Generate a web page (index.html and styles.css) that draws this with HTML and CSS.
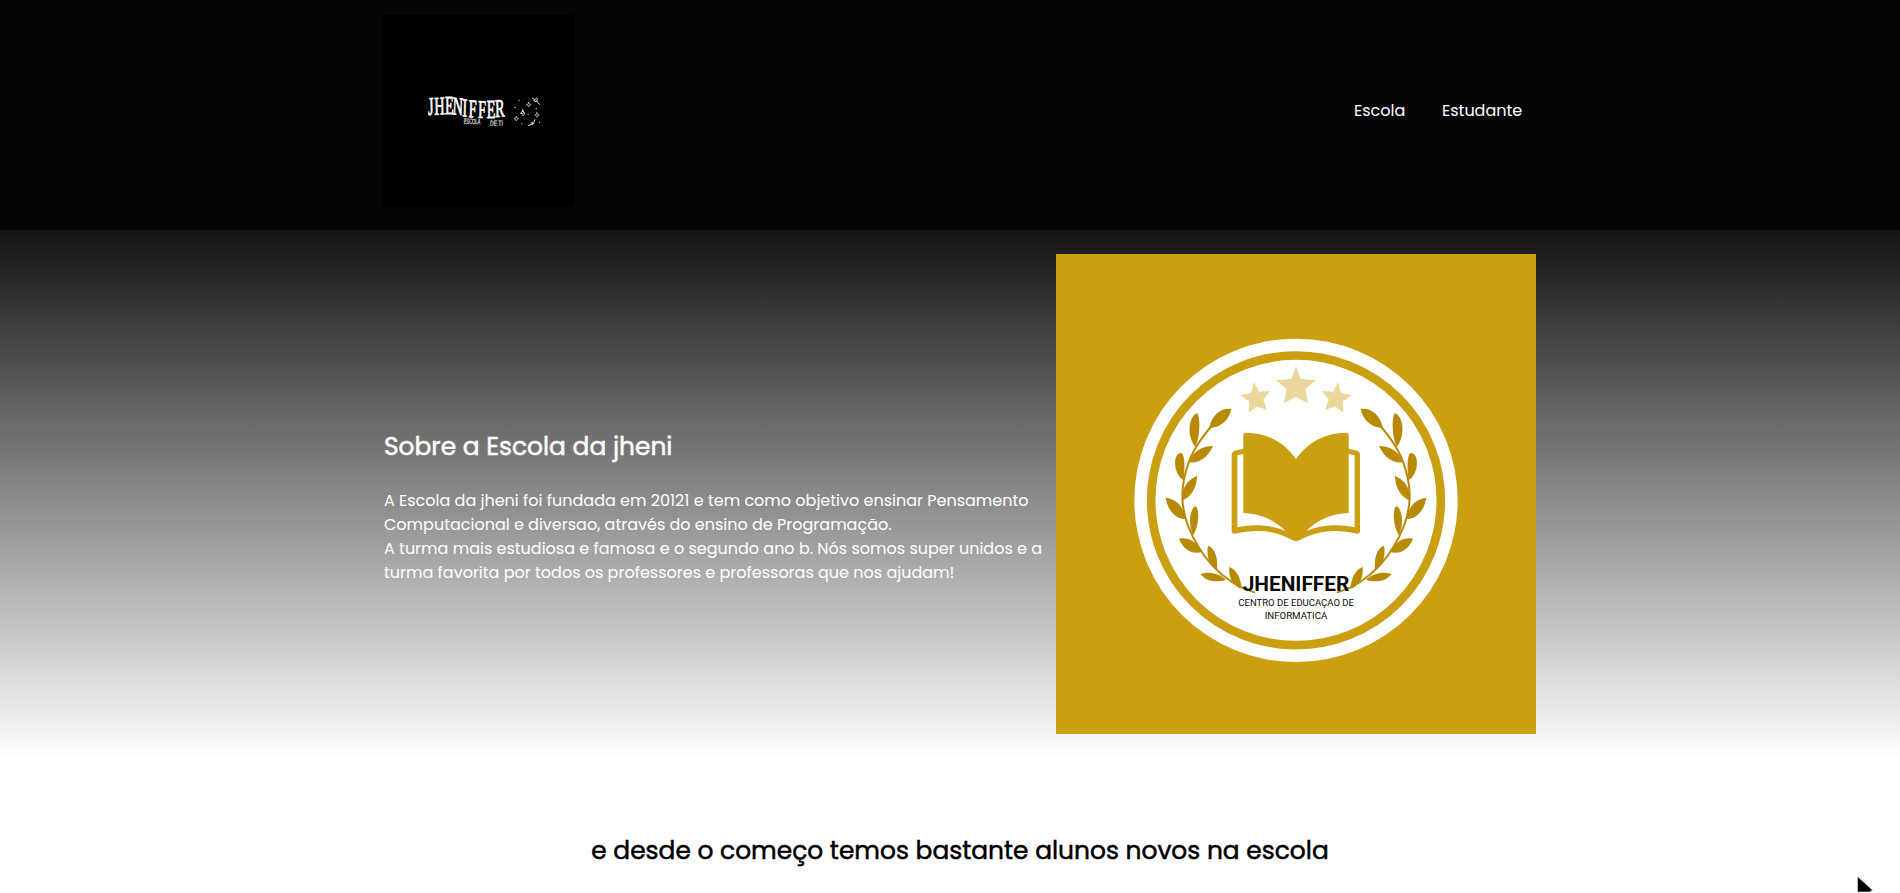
FILE: index.html
```html
<!DOCTYPE html>
<html lang="pt-BR">
<head>
<meta charset="utf-8">
<title>Escola da jheni</title>
<link rel="stylesheet" href="styles.css">
</head>
<body>
<header class="header">
  <div class="header-inner">
    <svg class="logo" viewBox="36 42 576 576" role="img" aria-label="Jheniffer">
      <rect x="36" y="42" width="576" height="576" fill="#000"/>
      <g fill="#fff" stroke="#fff" font-family="Liberation Serif, serif">
        <text transform="scale(.56 1)" font-size="76" stroke-width="2.5" x="312 346 402 442 494 528 578 625 671" y="345 344 342 343 348 351 353 354 351" rotate="-3 -2 0 3 3 2 1 0 -2">JHENIFFER</text>
        <text transform="translate(281 371) rotate(2) scale(.55 1)" font-family="Liberation Sans, sans-serif" font-size="23" stroke-width=".4" textLength="91" lengthAdjust="spacingAndGlyphs">ESCOLA</text>
        <text transform="translate(360 377) rotate(1) scale(.6 1)" font-family="Liberation Sans, sans-serif" font-size="23" stroke-width=".4" textLength="64" lengthAdjust="spacingAndGlyphs">DE TI</text>
      </g>
      <g fill="none" stroke="#ddd" stroke-width="2" stroke-linecap="round">
        <path d="M476 307l2 5 5 2-5 2-2 5-2-5-5-2 5-2zM501 338l2 5 5 2-5 2-2 5-2-5-5-2 5-2zM439 349l2 5 5 2-5 2-2 5-2-5-5-2 5-2z"/>
        <path d="M488 294q8 3 4 9q8-13 10-5q-1 8-8 7q10-5 9 3l6 5M458 328q-2 8 4 6q-10-1-10 7q8 2 10-5q5 10-5 10M475 376q8 2 8-5q5 9 7-3q-7-5-4 3q8 0 8-12" stroke-width="3"/>
        <path d="M447 301h1M434 322h2M498 325h2M474 343h1M455 371h1M508 367h1" stroke-width="3"/>
      </g>
    </svg>
    <nav class="nav">
      <a class="nav-link nav-escola">Escola</a>
      <a class="nav-link nav-estudante">Estudante</a>
    </nav>
  </div>
</header>
<main>
  <section class="about">
    <div class="about-inner">
      <div class="about-text">
        <h2 class="title">Sobre a Escola da jheni</h2>
        <p class="copy">
          <span class="line">A Escola da jheni foi fundada em 20121 e tem como objetivo ensinar Pensamento</span>
          <span class="line">Computacional e diversao, através do ensino de Programação.</span>
          <span class="line">A turma mais estudiosa e famosa e o segundo ano b. Nós somos super unidos e a</span>
          <span class="line">turma favorita por todos os professores e professoras que nos ajudam!</span>
        </p>
      </div>
      <svg class="emblem" viewBox="-192 -228 1440 1440" role="img" aria-label="Jheniffer centro de educação">
        <defs>
          <g id="branch">
            <path fill="none" stroke="#b88a04" stroke-width="6" stroke-linecap="round" d="M302 258C250 312 222 352 206 398C184 460 178 520 205 590C236 668 300 756 403 787"/>
            <path d="M334 237C303 233 274 256 268 294C298 293 326 275 334 237Z"/>
            <path d="M231 249C203 262 201 322 226 350C240 322 242 262 231 249Z"/>
            <path d="M279 348C240 348 216 369 209 397C240 401 264 380 279 348Z"/>
            <path d="M184 369C158 366 158 432 190 450C196 412 194 372 184 369Z"/>
            <path d="M231 437C196 453 183 482 188 511C218 498 231 466 231 437Z"/>
            <path d="M137 503C144 545 168 566 196 568C191 532 173 508 137 503Z"/>
            <path d="M227 528C206 538 206 590 219 616C236 592 240 540 227 528Z"/>
            <path d="M177 626C190 660 219 674 245 666C229 635 205 620 177 626Z"/>
            <path d="M264 647C258 676 268 709 291 720C294 685 286 654 264 647Z"/>
            <path d="M242 732C260 758 294 757 318 749C294 727 264 724 242 732Z"/>
            <path d="M328 711C325 742 337 768 365 776C363 746 350 719 328 711Z"/>
          </g>
          <g id="side">
            <use href="#branch" fill="#b88a04"/>
            <path fill="#e9d79b" d="M402 157l15 28 34-2-21 25 11 31-31-9-24 18 1-35-27-17 33-8z"/>
          </g>
        </defs>
        <rect x="-192" y="-228" width="1440" height="1440" fill="#cb9f12"/>
        <circle cx="528" cy="511" r="485" fill="#fff"/>
        <circle cx="528" cy="511" r="434.5" fill="none" stroke="#cb9f12" stroke-width="26"/>
        <use href="#side"/>
        <use href="#side" transform="translate(1056 0) scale(-1 1)"/>
        <path fill="#e9d79b" d="M528 108l14 39 45 4-31 27 8 42-36-19-37 19 9-42-32-27 46-4z"/>
        <path fill="#cb9f12" d="M335 373Q336 365 344 362L370 356V314Q370 308 378 308C440 309 492 335 528 387C564 335 616 309 678 308Q686 308 686 314V356L712 362Q720 365 720 373V606Q718 612 711 611C650 597 594 600 540 630Q528 636 516 630C462 600 406 597 345 611Q336 612 335 606Z"/>
        <path id="page" fill="#fff" d="M352 376L370 371V549C420 550 467 572 497 603C450 584 400 582 352 592Z"/>
        <use href="#page" transform="translate(1056 0) scale(-1 1)"/>
        <g font-family="Roboto, sans-serif" fill="#0b0b0b">
          <text x="368" y="783" font-size="63" font-weight="700" textLength="320" lengthAdjust="spacingAndGlyphs">JHENIFFER</text>
          <text x="355" y="829" font-size="29" textLength="347" lengthAdjust="spacingAndGlyphs">CENTRO DE EDUCAÇAO DE</text>
          <text x="434" y="867" font-size="29" textLength="188" lengthAdjust="spacingAndGlyphs">INFORMATICA</text>
        </g>
      </svg>
    </div>
  </section>
  <section class="students">
    <h2 class="students-title">e desde o começo temos bastante alunos novos na escola</h2>
  </section>
</main>
<svg class="pointer" viewBox="0 0 18 18" aria-hidden="true"><path d="M1.5 1.5V17H14L16.5 15Z" fill="#000" stroke="#ccc" stroke-width=".8"/></svg>
</body>
</html>
```
FILE: styles.css
```css
* { box-sizing: border-box; }
body {
  margin: 0;
  height: 893px;
  overflow: hidden;
  background: #fff;
  font-family: Poppins, Inter, sans-serif;
  font-size: 16px;
  line-height: 24px;
}
h2, p { margin: 0; }
.header { height: 230px; padding-top: 14px; background: #050507; }
.header-inner, .about-inner {
  width: 1154px;
  margin-left: 382px;
  display: flex;
  align-items: center;
  justify-content: space-between;
}
.logo { display: block; width: 192px; height: 192px; }
.nav { display: flex; gap: 36px; padding: 2px 13px 0 0; }
.nav-link { color: #fff; white-space: nowrap; }
.nav-escola { width: 52px; }
.nav-estudante { width: 81px; }
.about { height: 528px; padding-top: 24px; background: linear-gradient(#151213, #fff); }
.about-text { color: #fff; padding: 25px 0 0 2px; }
.title, .students-title {
  font-size: 24.9px;
  font-weight: 400;
  line-height: 36px;
  -webkit-text-stroke: .5px currentColor;
}
.title { margin-bottom: 24px; }
.line { display: block; white-space: nowrap; }
.emblem { display: block; width: 480px; height: 480px; flex: none; }
.students { padding-top: 75px; text-align: center; padding-left: 20px; }
.students-title { color: #000; }
.pointer { position: absolute; left: 1856px; top: 875px; width: 18px; height: 18px; }
```
